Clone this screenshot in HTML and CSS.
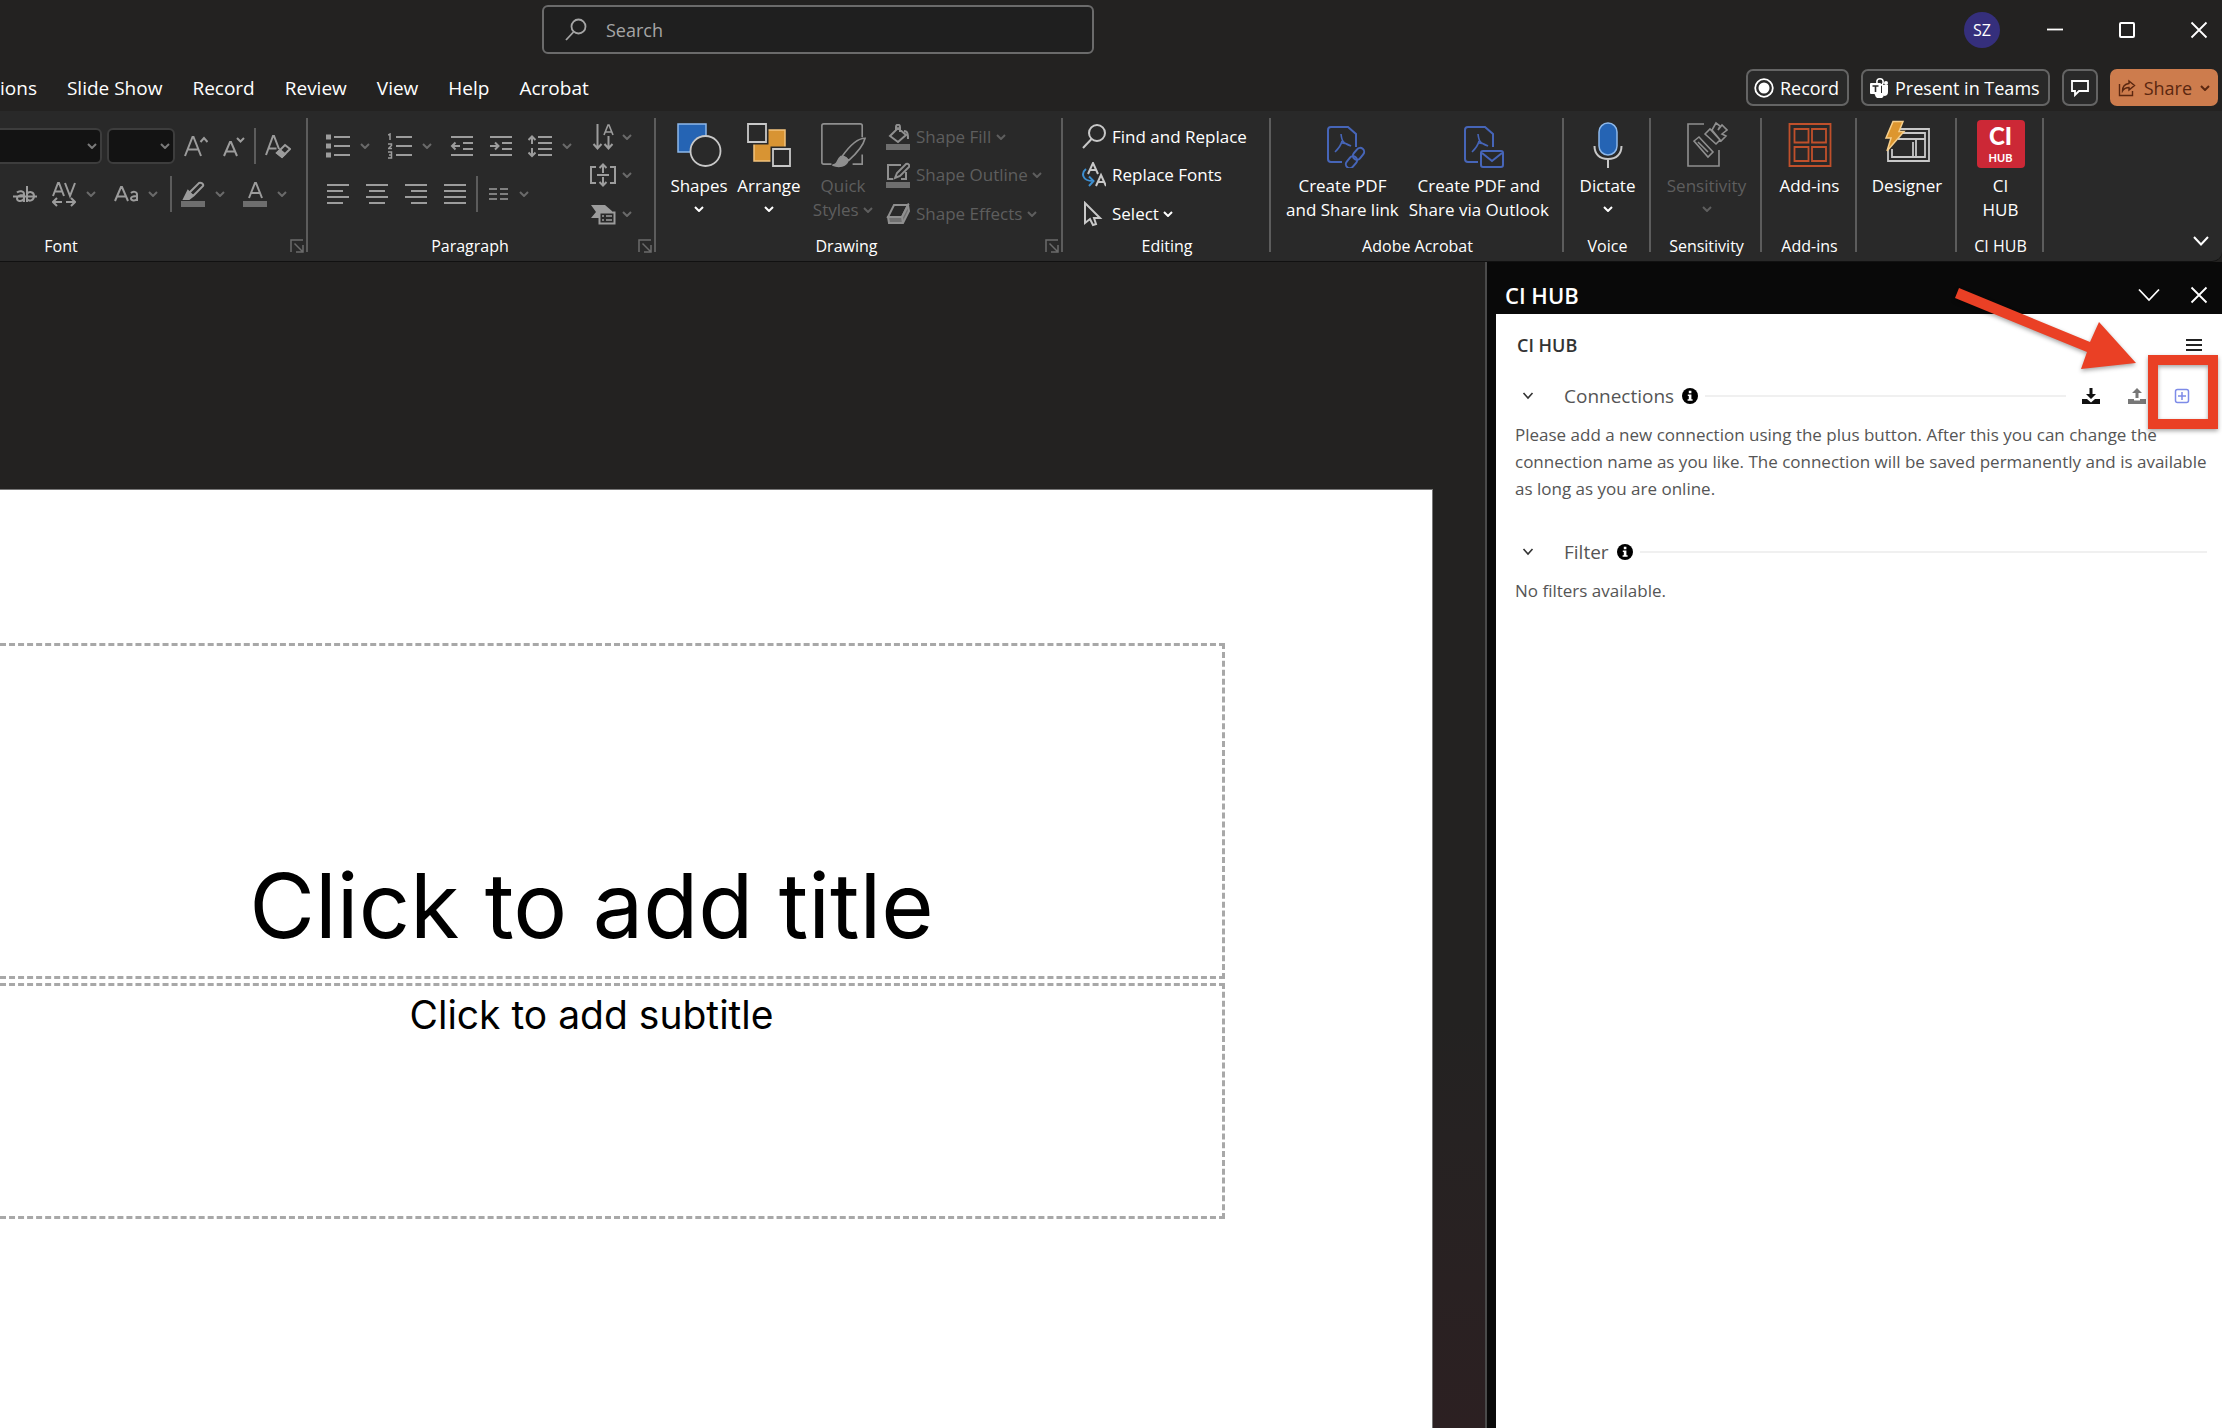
FILE: index.html
```html
<!DOCTYPE html>
<html lang="en">
<head>
<meta charset="utf-8">
<title>Presentation</title>
<link rel="stylesheet" href="styles.css">
</head>
<body>
<svg class="defs" aria-hidden="true">
  <symbol id="chev" viewBox="0 0 10 6"><path d="M1 1l4 4 4-4" fill="none" stroke="currentColor" stroke-width="2"/></symbol>
  <symbol id="launch" viewBox="0 0 14 14"><path d="M1 13V1h12M4.500 4.500l8 8M13 6v7H6" fill="none" stroke="currentColor" stroke-width="1.500"/></symbol>
  <symbol id="info" viewBox="0 0 16 16"><circle cx="8" cy="8" r="8" fill="#000"/><path d="M6.800 2.800h2.600v2.400H6.800zM5.800 6.400h3.600v4.800h1.200v1.600H5.600v-1.600h1.200V8h-1z" fill="#fff"/></symbol>
</svg>

<header class="titlebar">
  <label class="search">
    <svg width="24" height="24" viewBox="0 0 24 24" fill="none" stroke="#a5a5a5" stroke-width="1.800"><circle cx="14.500" cy="8.500" r="7"/><path d="M9.500 14L2 22"/></svg>
    <input type="search" placeholder="Search" aria-label="Search">
  </label>
  <div class="window-controls">
    <button class="avatar" type="button">SZ</button>
    <button class="win" type="button" aria-label="Minimize"><svg width="18" height="18" viewBox="0 0 18 18"><path d="M1 8.500h16" stroke="#fff" stroke-width="1.800"/></svg></button>
    <button class="win" type="button" aria-label="Maximize"><svg width="18" height="18" viewBox="0 0 18 18"><rect x="2" y="2" width="14" height="14" rx="1" fill="none" stroke="#fff" stroke-width="2"/></svg></button>
    <button class="win" type="button" aria-label="Close"><svg width="18" height="18" viewBox="0 0 18 18"><path d="M1.500 1.500l15 15M16.500 1.500l-15 15" stroke="#fff" stroke-width="1.800"/></svg></button>
  </div>
</header>

<div class="tabbar">
  <nav class="tabs">
    <a href="#">ions</a><a href="#">Slide Show</a><a href="#">Record</a><a href="#">Review</a><a href="#">View</a><a href="#">Help</a><a href="#">Acrobat</a>
  </nav>
  <div class="actions">
    <button class="action" type="button"><svg width="20" height="20" viewBox="0 0 20 20"><circle cx="10" cy="10" r="8.800" fill="none" stroke="#fff" stroke-width="1.800"/><circle cx="10" cy="10" r="5.500" fill="#fff"/></svg>Record</button>
    <button class="action" type="button"><svg width="20" height="20" viewBox="0 0 20 20"><circle cx="11" cy="4" r="3.200" fill="none" stroke="#fff" stroke-width="1.500"/><circle cx="17" cy="5" r="2" fill="#fff"/><path d="M14 7h5v7a4 4 0 01-4 4zM5 15h8v-8h2v8a4 4 0 01-9 2z" fill="#fff"/><rect x="1" y="5" width="11" height="11" rx="1" fill="#fff"/><path d="M3.500 8h6M6.500 8v6" stroke="#292929" stroke-width="1.600"/></svg>Present in Teams</button>
    <button class="action comment" type="button" aria-label="Comments"><svg width="20" height="18" viewBox="0 0 20 18"><path d="M2 2h16v10H9l-4 4v-4H2z" fill="none" stroke="#fff" stroke-width="1.800"/></svg></button>
    <button class="action share" type="button"><svg width="18" height="18" viewBox="0 0 18 18" fill="none" stroke="#5b2710" stroke-width="1.400"><path d="M1.500 5v11.500h13V12"/><path d="M11 2l5.500 4.500L11 11V8.500C8 8.500 6 9.500 4.500 12 4.500 8 7 5 11 4.500z"/></svg>Share<svg class="c" width="10" height="6"><use href="#chev"/></svg></button>
  </div>
</div>

<section class="ribbon" aria-label="Ribbon">
  <div class="group g-font">
    <div class="rows">
      <div class="row">
        <div class="boxes">
          <button class="combo name" type="button" aria-label="Font name"><svg width="10" height="6"><use href="#chev"/></svg></button>
          <button class="combo size" type="button" aria-label="Font size"><svg width="10" height="6"><use href="#chev"/></svg></button>
        </div>
        <div class="cluster">
          <button class="tool" type="button" aria-label="Increase font size"><svg width="24" height="24" viewBox="0 0 24 24"><path d="M1 22L8.500 3h1L17 22M4 15.500h10M16.500 8l3.500-4 3.500 4"/></svg></button>
          <button class="tool" type="button" aria-label="Decrease font size"><svg width="22" height="24" viewBox="0 0 22 24"><path d="M1 22L7 8h1l6 14M3.500 17.500h8M14 4l3.500 3.500L21 4"/></svg></button>
        </div>
        <span class="sep"></span>
        <button class="tool" type="button" aria-label="Clear formatting"><svg width="26" height="26" viewBox="0 0 26 26"><path d="M1 22L8 3h1l5 13M3.500 15.500h8M20 12l5 4-8 8-5-4z"/><path d="M15 17l5 4-3 3-5-4z" fill="currentColor"/></svg></button>
      </div>
      <div class="row second">
        <div class="cluster">
          <button class="tool" type="button" aria-label="Strikethrough"><svg width="24" height="24" viewBox="0 0 24 24"><path d="M0 14.500h24M4 10.500c2-2 7-2 7 1.500v8M11 13c-4 0-7 1-7 3.500s4 4 7 .5M14 4v16M14 12c2-3 7-2.500 7 2s-5 6-7 3"/></svg></button>
          <button class="tool" type="button" aria-label="Character spacing"><svg width="24" height="26" viewBox="0 0 24 26"><path d="M1 15L6 2h1l5 13M3 10.500h7M13 2l5 13 5-13M1 21h9M5 17l-4 4 4 4M14 21h9M19 17l4 4-4 4"/></svg><svg class="c" width="10" height="6"><use href="#chev"/></svg></button>
          <button class="tool" type="button" aria-label="Change case"><svg width="24" height="24" viewBox="0 0 24 24"><path d="M1 19L7 5h1l6 14M3 14.500h9M17 11c2-2 6-1.500 6 1.500V19M23 14c-3 0-6 .5-6 2.500s4 3 6 .5"/></svg><svg class="c" width="10" height="6"><use href="#chev"/></svg></button>
        </div>
        <span class="sep"></span>
        <div class="cluster">
          <button class="tool" type="button" aria-label="Highlight color"><svg width="24" height="26" viewBox="0 0 24 26"><path d="M9 11l9-9c2-1 5 1 4 3l-9 9-5 1z"/><path d="M7 10l5 5-4 3H3z" fill="currentColor"/><path class="bar" d="M0 20h24v6H0z"/></svg><svg class="c" width="10" height="6"><use href="#chev"/></svg></button>
          <button class="tool" type="button" aria-label="Font color"><svg width="24" height="26" viewBox="0 0 24 26"><path d="M6 17l6-15h1l6 15M8 12h9"/><path class="bar" d="M0 20h24v6H0z"/></svg><svg class="c" width="10" height="6"><use href="#chev"/></svg></button>
        </div>
      </div>
    </div>
    <div class="label">Font</div>
    <button class="launcher" type="button" aria-label="Font settings"><svg width="14" height="14"><use href="#launch"/></svg></button>
  </div>

  <div class="group g-para">
    <div class="split">
      <div class="rows">
        <div class="row">
          <div class="cluster">
            <button class="tool" type="button" aria-label="Bullets"><svg width="24" height="24" viewBox="0 0 24 24"><path d="M8 3h16M8 12h16M8 21h16"/><path class="solid" d="M0 .500h5v5H0zM0 9.500h5v5H0zM0 18.500h5v5H0z"/></svg><svg class="c" width="10" height="6"><use href="#chev"/></svg></button>
            <button class="tool" type="button" aria-label="Numbering"><svg width="24" height="26" viewBox="0 0 24 26"><path d="M8 4h16M8 13h16M8 22h16"/><path d="M0 2l2-1v6M0 11h3.500v1.500L.500 15.500H4M0 19h3.500v6H0M1 22h2.500" stroke-width="1.500"/></svg><svg class="c" width="10" height="6"><use href="#chev"/></svg></button>
            <button class="tool" type="button" aria-label="Decrease indent"><svg width="24" height="24" viewBox="0 0 24 24"><path d="M1 3h22M13 9h10M13 15h10M1 21h22M10 12H2M5.500 8.500L2 12l3.500 3.500"/></svg></button>
            <button class="tool" type="button" aria-label="Increase indent"><svg width="24" height="24" viewBox="0 0 24 24"><path d="M1 3h22M13 9h10M13 15h10M1 21h22M1 12h8M6 8.500L9.500 12 6 15.500"/></svg></button>
            <button class="tool" type="button" aria-label="Line spacing"><svg width="24" height="24" viewBox="0 0 24 24"><path d="M10 3h14M10 9h14M10 15h14M10 21h14M4 3v7M4 14v8M.500 6L4 2.500 7.500 6M.500 18.500L4 22l3.500-3.500"/></svg><svg class="c" width="10" height="6"><use href="#chev"/></svg></button>
          </div>
        </div>
        <div class="row">
          <div class="cluster">
            <button class="tool" type="button" aria-label="Align left"><svg width="24" height="24" viewBox="0 0 24 24"><path d="M1 3h22M1 9h16M1 15h22M1 21h16"/></svg></button>
            <button class="tool" type="button" aria-label="Center"><svg width="24" height="24" viewBox="0 0 24 24"><path d="M1 3h22M4 9h16M1 15h22M4 21h16"/></svg></button>
            <button class="tool" type="button" aria-label="Align right"><svg width="24" height="24" viewBox="0 0 24 24"><path d="M1 3h22M7 9h16M1 15h22M7 21h16"/></svg></button>
            <button class="tool" type="button" aria-label="Justify"><svg width="24" height="24" viewBox="0 0 24 24"><path d="M1 3h22M1 9h22M1 15h22M1 21h22"/></svg></button>
          </div>
          <span class="sep"></span>
          <button class="tool columns" type="button" aria-label="Columns"><svg width="20" height="24" viewBox="0 0 20 24"><path d="M0 7h8M0 12h8M0 17h8M11 7h8M11 12h8M11 17h8" stroke-width="1.700"/></svg><svg class="c" width="10" height="6"><use href="#chev"/></svg></button>
        </div>
      </div>
      <div class="stack">
        <button class="tool" type="button" aria-label="Text direction"><svg width="26" height="26" viewBox="0 0 26 26"><path d="M7.500 0v24M3.500 20l4 4.500 4-4.500M18.500 12v12M14.500 20l4 4.500 4-4.500"/><path d="M14 11l4-10h1l4 10M15.500 8h6" stroke-width="1.600"/></svg><svg class="c" width="10" height="6"><use href="#chev"/></svg></button>
        <button class="tool" type="button" aria-label="Align text"><svg width="26" height="24" viewBox="0 0 26 24"><path d="M6 4H1v16h5M20 4h5v16h-5M7 12h12M13 2v8M13 14v8M9.500 5L13 1.500 16.500 5M9.500 19l3.500 3.500 3.500-3.500"/></svg><svg class="c" width="10" height="6"><use href="#chev"/></svg></button>
        <button class="tool" type="button" aria-label="Convert to SmartArt"><svg width="26" height="22" viewBox="0 0 26 22"><path d="M1 2h14l7 6v2H9v5H1l5-6z" fill="currentColor" stroke="none"/><rect x="9.500" y="9.500" width="15" height="11" fill="#292929"/><path d="M12 13h2M16 13h6M12 17h2M16 17h6" stroke-width="1.600"/></svg><svg class="c" width="10" height="6"><use href="#chev"/></svg></button>
      </div>
    </div>
    <div class="label para">Paragraph</div>
    <button class="launcher" type="button" aria-label="Paragraph settings"><svg width="14" height="14"><use href="#launch"/></svg></button>
  </div>

  <div class="group g-draw">
    <div class="split">
      <button class="big" type="button"><svg width="46" height="48" viewBox="0 0 46 48"><rect x="2" y="4" width="28" height="28" fill="#2564b4" stroke="#8db8ea" stroke-width="1.500"/><circle cx="29.500" cy="31" r="15" fill="#292929" stroke="#c8c8c8" stroke-width="1.800"/></svg><span>Shapes</span><svg class="c" width="10" height="6"><use href="#chev"/></svg></button>
      <button class="big" type="button"><svg width="46" height="48" viewBox="0 0 46 48"><rect x="8" y="10" width="31" height="31" fill="#d89433" stroke="#f2c27c" stroke-width="1.500"/><g fill="#292929" stroke="#c8c8c8" stroke-width="1.800"><path stroke="#292929" stroke-width="5" d="M2 4h18v18H2zM27 29h17v17H27z"/><path d="M2 4h18v18H2zM27 29h17v17H27z"/></g></svg><span>Arrange</span><svg class="c" width="10" height="6"><use href="#chev"/></svg></button>
      <button class="big off quick" type="button"><svg width="48" height="50" viewBox="0 0 48 50" fill="none" stroke="#8f8f8f" stroke-width="1.700"><path d="M12 46H4a2 2 0 01-2-2V6a2 2 0 012-2h38a2 2 0 012 2v12M44 36v10H34"/><path d="M23 38c7-10 16-19 24-19-2 8-8 15-17 23z" fill="#292929"/><path d="M13 47c6 0 4-5 9-9 5 0 7 2 7 5-2 5-9 7-16 4z" fill="#8f8f8f"/></svg><span>Quick</span><span>Styles <svg class="c" width="10" height="6"><use href="#chev"/></svg></span></button>
      <div class="stack list off">
        <button class="item" type="button"><svg width="24" height="26" viewBox="0 0 24 26"><path d="M4 12l8-8 8 7-8 7zM10 6V3c0-3 4-3 4 0v5M18 7c4 0 4 4 4 8"/><path class="bar" d="M0 20h24v6H0z"/></svg><span>Shape Fill <svg class="c" width="10" height="6"><use href="#chev"/></svg></span></button>
        <button class="item" type="button"><svg width="24" height="26" viewBox="0 0 24 26"><path d="M15 3H2v14h5M20 10v7h-5M9 16l2-5L20 2c2-1 4 1 3 3l-9 9z"/><path class="bar" d="M0 20h24v6H0z"/></svg><span>Shape Outline <svg class="c" width="10" height="6"><use href="#chev"/></svg></span></button>
        <button class="item" type="button"><svg width="24" height="22" viewBox="0 0 24 22"><path d="M8 2h14l-6 12H2z"/><path d="M2 14h14l6-12 1 6-6 12H3z" fill="currentColor" fill-opacity=".7"/><path d="M16 14l1 6"/></svg><span>Shape Effects <svg class="c" width="10" height="6"><use href="#chev"/></svg></span></button>
      </div>
    </div>
    <div class="label draw">Drawing</div>
    <button class="launcher" type="button" aria-label="Drawing settings"><svg width="14" height="14"><use href="#launch"/></svg></button>
  </div>

  <div class="group g-edit">
    <div class="stack list edit">
      <button class="item" type="button"><svg width="24" height="26" viewBox="0 0 24 26"><circle cx="15" cy="9" r="8"/><path d="M9.500 15L1 24"/></svg><span>Find and Replace</span></button>
      <button class="item" type="button"><svg width="24" height="26" viewBox="0 0 24 26"><path d="M6 12l5-11 5 11M8 8h6M14 24l5-11 5 11M16 20h6"/><path d="M4 7c-5 4-4 12 7 12M7 14.500l4.500 4.500L7 24" stroke="#3d8fd1"/></svg><span>Replace Fonts</span></button>
      <button class="item" type="button"><svg width="24" height="26" viewBox="0 0 24 26"><path d="M3 2v20l5-4 3 6 3-1-2-6h6z"/></svg><span>Select <svg class="c" width="10" height="6"><use href="#chev"/></svg></span></button>
    </div>
    <div class="label">Editing</div>
  </div>

  <div class="group g-acro">
    <div class="split">
      <button class="big" type="button"><svg width="40" height="48" viewBox="0 0 40 48" fill="none" stroke="#4665b8" stroke-width="2"><path d="M15 42H4a3 3 0 01-3-3V10a3 3 0 013-3h17l8 7v13"/><path d="M14 14c1 8 2 9 10 12M15 21c-1 5-4 8-7 11M15 23c3 0 6 1 9 3" stroke-width="1.600"/><g transform="rotate(-50 28 38)"><rect x="16" y="34" width="13" height="8" rx="4"/><rect x="27" y="34" width="13" height="8" rx="4"/></g></svg><span>Create PDF</span><span>and Share link</span></button>
      <button class="big" type="button"><svg width="40" height="48" viewBox="0 0 40 48" fill="none" stroke="#4665b8" stroke-width="2"><path d="M14 42H4a3 3 0 01-3-3V10a3 3 0 013-3h17l8 7v13"/><path d="M14 14c1 8 2 9 10 12M15 21c-1 5-4 8-7 11M15 23c3 0 6 1 9 3" stroke-width="1.600"/><rect x="17" y="31" width="22" height="16" rx="2"/><path d="M18 33l10 8 10-8"/></svg><span>Create PDF and</span><span>Share via Outlook</span></button>
    </div>
    <div class="label">Adobe Acrobat</div>
  </div>

  <div class="group g-voice">
    <button class="big" type="button"><svg width="30" height="48" viewBox="0 0 30 48" fill="none" stroke="#c8c8c8" stroke-width="2"><path d="M1.500 26c0 8 5 13 13.500 13s13.500-5 13.500-13M15 39v9"/><rect x="6" y="3" width="18" height="32" rx="9" fill="#2564b4" stroke="#8db8ea" stroke-width="1.500"/></svg><span>Dictate</span><svg class="c" width="10" height="6"><use href="#chev"/></svg></button>
    <div class="label">Voice</div>
  </div>
  <div class="group g-sens">
    <button class="big off" type="button"><svg width="42" height="48" viewBox="0 0 42 48" fill="none" stroke="#8f8f8f" stroke-width="1.600"><path d="M18 4H2v42h31V30"/><path d="M8 21l5-4 14 15-5 5zM12 22l10 10"/><path d="M19 14l5-5 10 11-4 4zM26 10l4-7 4 3-2 4 4-5 5 5-5 4 4 2-5 5z"/></svg><span>Sensitivity</span><svg class="c" width="10" height="6"><use href="#chev"/></svg></button>
    <div class="label">Sensitivity</div>
  </div>
  <div class="group g-add">
    <button class="big" type="button"><svg width="44" height="48" viewBox="0 0 44 48" fill="none" stroke="#c0502b" stroke-width="1.800"><path d="M1.500 4h41v42h-41zM6.500 9h14v13.500h-14zM24 9h14v13.500H24zM6.500 27h14v14h-14zM24 27h14v14H24z"/></svg><span>Add-ins</span></button>
    <div class="label">Add-ins</div>
  </div>
  <div class="group g-design">
    <button class="big" type="button"><svg width="46" height="48" viewBox="0 0 46 48" fill="none" stroke="#c8c8c8" stroke-width="1.800"><path d="M16 9h29v32H4V30M16 13h25v24H8v-8M14 19h27M32 19v18M29 22v15"/><path d="M9 1.500h10l-4 10h5L3 31l4-13H2z" fill="#dd962f" stroke="#f6cf8c" stroke-width="1.500"/></svg><span>Designer</span></button>
  </div>
  <div class="group g-hub">
    <button class="big" type="button"><span class="hub-logo"><b>CI</b><i>HUB</i></span><span>CI</span><span>HUB</span></button>
    <div class="label">CI HUB</div>
  </div>
  <button class="collapse" type="button" aria-label="Collapse ribbon"><svg width="16" height="10" viewBox="0 0 16 10"><path d="M1 1l7 7.500L15 1" fill="none" stroke="#fff" stroke-width="2"/></svg></button>
</section>

<div class="workspace">
  <main class="canvas">
    <div class="slide">
      <h1 class="placeholder title">Click to add title</h1>
      <p class="placeholder subtitle">Click to add subtitle</p>
    </div>
  </main>
  <aside class="pane">
    <div class="pane-head">
      <h2>CI HUB</h2>
      <button type="button" aria-label="Pane options"><svg width="22" height="14" viewBox="0 0 22 14"><path d="M1 1.500l10 10.500L21 1.500" fill="none" stroke="#fff" stroke-width="1.800"/></svg></button>
      <button type="button" aria-label="Close pane"><svg width="18" height="18" viewBox="0 0 18 18"><path d="M1.500 1.500l15 15M16.500 1.500l-15 15" stroke="#fff" stroke-width="1.800"/></svg></button>
    </div>
    <div class="pane-body">
      <div class="pane-title"><h3>CI HUB</h3><button type="button" aria-label="Menu"><svg width="16" height="14" viewBox="0 0 16 14"><path d="M0 2h16M0 7h16M0 12h16" stroke="#222" stroke-width="2"/></svg></button></div>
      <div class="section">
        <svg class="fold" width="12" height="8" viewBox="0 0 12 8"><path d="M1.500 1l4.500 5L10.500 1" fill="none" stroke="#333" stroke-width="1.600"/></svg>
        <h4>Connections</h4><svg width="16" height="16"><use href="#info"/></svg><span class="rule"></span>
        <div class="section-tools">
          <button type="button" aria-label="Import"><svg width="18" height="18" viewBox="0 0 18 18"><path d="M7.500 1h3v6H14l-5 5-5-5h3.500zM0 12h5l4 3.500 4-3.500h5v5H0z" fill="#111"/></svg></button>
          <button type="button" aria-label="Export"><svg width="18" height="18" viewBox="0 0 18 18"><path d="M7.500 11h3V6H14L9 1 4 6h3.500zM0 12h6v1.500h6V12h6v5H0z" fill="#777"/></svg></button>
          <button type="button" aria-label="Add connection"><svg width="16" height="16" viewBox="0 0 16 16" fill="none" stroke="#7d8be8" stroke-width="1.500"><rect x="1.500" y="1.500" width="13" height="13" rx="2"/><path d="M8 4v8M4 8h8"/></svg></button>
        </div>
      </div>
      <p>Please add a new connection using the plus button. After this you can change the connection name as you like. The connection will be saved permanently and is available as long as you are online.</p>
      <div class="section filter">
        <svg class="fold" width="12" height="8" viewBox="0 0 12 8"><path d="M1.500 1l4.500 5L10.500 1" fill="none" stroke="#333" stroke-width="1.600"/></svg>
        <h4>Filter</h4><svg width="16" height="16"><use href="#info"/></svg><span class="rule"></span>
      </div>
      <p>No filters available.</p>
    </div>
    <svg class="arrow" width="184" height="90" viewBox="0 0 184 90"><path d="M5 1l131 54 9-20 37 41-55 6 6-17L1 11z" fill="#ea4025"/></svg>
    <span class="marker"></span>
  </aside>
</div>
</body>
</html>
```
FILE: styles.css
```css
* { box-sizing: border-box; }

body {
  margin: 0;
  min-height: 100vh;
  display: flex;
  flex-direction: column;
  overflow-x: hidden;
  background: #232221;
  color: #fff;
  font: 17px/24px "Open Sans", "Noto Sans", sans-serif;
}

h1, h2, h3, h4, p { margin: 0; font-weight: 400; }

button {
  margin: 0;
  padding: 0;
  border: 0;
  background: none;
  color: inherit;
  font: inherit;
  display: flex;
  align-items: center;
}

svg { flex: none; }
.defs { position: absolute; width: 0; height: 0; }

/* Title bar */
.titlebar {
  display: grid;
  grid-template-columns: 542fr 552fr 1128fr;
  height: 62px;
  padding-top: 5px;
  align-items: start;
}

.search {
  grid-column: 2;
  display: flex;
  align-items: center;
  gap: 18px;
  height: 49px;
  padding-left: 20px;
  border: 2px solid #6b6b6b;
  border-radius: 6px;
  background: #1f1f1f;
}

.search input {
  flex: 1;
  min-width: 0;
  padding: 0;
  border: 0;
  outline: 0;
  background: none;
  color: #fff;
  font: inherit;
  font-size: 18px;
}

.search input::placeholder { color: #a5a5a5; opacity: 1; }

.window-controls {
  display: flex;
  justify-content: flex-end;
  align-items: center;
  gap: 54px;
  height: 49px;
  padding-right: 14px;
}

.avatar {
  width: 36px;
  height: 36px;
  margin-right: -8px;
  border-radius: 50%;
  justify-content: center;
  background: #352f7c;
  font-size: 16px;
}

/* Tabs */
.tabbar {
  display: flex;
  justify-content: space-between;
  align-items: center;
  height: 49px;
  padding: 2px 4px 0 0;
}

.tabs { display: flex; gap: 30px; font-size: 19px; }
.tabs a { color: #fff; text-decoration: none; white-space: nowrap; }

.actions { display: flex; gap: 12px; font-size: 18px; }

.action {
  gap: 6px;
  height: 37px;
  padding: 0 8px 0 6px;
  border: 2px solid #646464;
  border-radius: 7px;
  background: #292929;
  white-space: nowrap;
}

.action.comment { padding: 0 6px; }

.action.share {
  gap: 8px;
  padding: 0 6px;
  border-color: #cd7c4d;
  background: #cd7c4d;
  color: #5b2710;
}

/* Ribbon */
.ribbon {
  display: flex;
  height: 151px;
  padding-top: 7px;
  border-bottom: 1px solid #111;
  border-radius: 0 0 10px 0;
  background: #292929;
}

.group {
  position: relative;
  flex: none;
  display: flex;
  flex-direction: column;
  height: 140px;
  background: linear-gradient(#5c5c5c, #5c5c5c) right top / 2px 134px no-repeat;
}

.g-font { width: 308px; }
.g-para { width: 348px; }
.g-draw { width: 407px; }
.g-edit { width: 208px; }
.g-acro { width: 293px; }
.g-voice { width: 87px; }
.g-sens { width: 111px; }
.g-add { width: 95px; }
.g-design { width: 100px; }
.g-hub { width: 87px; }

.label {
  margin-top: auto;
  text-align: center;
  font-size: 16px;
  font-weight: 500;
  white-space: nowrap;
}

.g-font .label { padding-right: 186px; }
.label.para { padding-right: 24px; }
.label.draw { padding-right: 26px; }

.launcher { position: absolute; right: 4px; bottom: 5px; color: #6b6b6b; }

.rows { display: flex; flex-direction: column; gap: 12px; padding-top: 10px; }
.row { display: flex; align-items: center; gap: 9px; height: 36px; }
.row.second { padding-left: 13px; }
.boxes { display: flex; gap: 5px; }
.cluster { display: flex; align-items: center; gap: 15px; }
.sep { width: 2px; height: 36px; background: #5c5c5c; }

.combo {
  justify-content: flex-end;
  height: 36px;
  padding-right: 3px;
  border: 2px solid #3d3d3d;
  border-radius: 6px;
  background: #131313;
  color: #7a7a7a;
}

.combo.name { width: 102px; border-left: 0; border-radius: 0 6px 6px 0; }
.combo.size { width: 68px; }

.tool { color: #9c9c9c; }
.tool > svg:not(.c), .item > svg { fill: none; stroke: currentColor; stroke-width: 2; }
.tool .c { margin: 0 3px 0 10px; color: #6a6a6a; }
.columns { padding-left: 2px; }
svg .bar { fill: #6e6e6e; stroke: none; }
svg .solid { fill: currentColor; stroke: none; }

.split { display: flex; }
.g-para .split { justify-content: space-between; padding: 0 20px 0 18px; }

.stack { display: flex; flex-direction: column; height: 115px; }
.stack > button { flex: 1; }
.stack .tool .c { margin: 0 4px 0 6px; }

.big {
  flex-direction: column;
  align-items: center;
  padding-top: 2px;
  white-space: nowrap;
}

.big > svg:first-child, .hub-logo { height: 48px; margin-bottom: 6px; }
.big > .c { margin-top: 8px; }
.off { color: #5e5e5e; }

.g-draw .split { padding-left: 8px; }
.g-draw .big { width: 70px; }
.g-draw .big.quick { width: 78px; }
.list .item { gap: 6px; white-space: nowrap; }
.list .item .c, .quick span .c { vertical-align: 3px; }
.list.off { padding-left: 4px; }
.item > svg { color: #8f8f8f; }
.list.edit { padding-left: 19px; }
.edit .item > svg { color: #c8c8c8; }

.g-acro .split { justify-content: center; gap: 10px; }
.g-acro .big > svg { margin-left: 10px; }

.hub-logo {
  display: flex;
  flex-direction: column;
  align-items: center;
  gap: 2px;
  width: 48px;
  padding-top: 3px;
  border-radius: 4px;
  background: #cc2836;
}

.hub-logo b { font: 900 24px/26px Lato, sans-serif; }
.hub-logo i { font: 700 11px/14px Lato, sans-serif; }

.collapse { margin: auto 13px 15px auto; }

/* Workspace */
.workspace {
  flex: 1;
  display: grid;
  grid-template-columns: 1485fr 737fr;
}

.canvas {
  display: flex;
  padding: 227px 52px 0 0;
  background: linear-gradient(#232221 0, #232221 65%, #262222 75%, #2c2022 100%);
}

.slide {
  flex: 1;
  padding: 153px 207px 0 0;
  border-top: 1px solid #777;
  border-right: 1px solid #777;
  background: #fff;
  color: #000;
}

.placeholder {
  border: 3px dashed #a8a8a8;
  border-left: 0;
  text-align: center;
  font-family: Inter, "Liberation Sans", sans-serif;
}

.title {
  display: flex;
  align-items: flex-end;
  justify-content: center;
  height: 336px;
  margin-bottom: 4px;
  padding: 0 39px 14px 0;
  font-size: 90px;
  line-height: 112px;
}

.subtitle {
  height: 236px;
  padding: 6px 39px 0 0;
  font-size: 39px;
  line-height: 46px;
}

/* Task pane */
.pane {
  position: relative;
  display: flex;
  flex-direction: column;
  padding-left: 9px;
  border-left: 2px solid #4a4a4a;
  background: #090909;
}

.pane-head {
  display: flex;
  align-items: center;
  gap: 30px;
  height: 52px;
  padding: 14px 14px 0 9px;
}

.pane-head h2 { flex: 1; font-size: 22px; font-weight: 600; }

.pane-body {
  flex: 1;
  padding: 17px 10px 0 19px;
  background: #fff;
  color: #555;
}

.pane-title {
  display: flex;
  align-items: center;
  justify-content: space-between;
  height: 28px;
  padding: 0 10px 0 2px;
}

.pane-title h3 { color: #333; font-size: 18px; font-weight: 600; }

.section {
  display: flex;
  align-items: center;
  height: 28px;
  margin-top: 23px;
  padding-left: 7px;
}

.section.filter { margin-top: 36px; padding-right: 5px; }
.section h4 { margin: 0 8px 0 30px; font-size: 19px; }
.rule { flex: 1; height: 2px; margin-left: 7px; background: #f0f0f0; }
.section-tools { display: flex; gap: 28px; padding: 0 22px 0 16px; }
.pane-body p { margin-top: 11px; font-size: 17px; line-height: 27px; }

/* Callout drawn over the pane */
.arrow { position: absolute; right: 84px; top: 25px; filter: drop-shadow(0 2px 2px rgba(0, 0, 0, .35)); }

.marker {
  position: absolute;
  right: 4px;
  top: 93px;
  width: 70px;
  height: 74px;
  border: 10px solid #ea4025;
  filter: drop-shadow(0 2px 2px rgba(0, 0, 0, .35));
}
```
